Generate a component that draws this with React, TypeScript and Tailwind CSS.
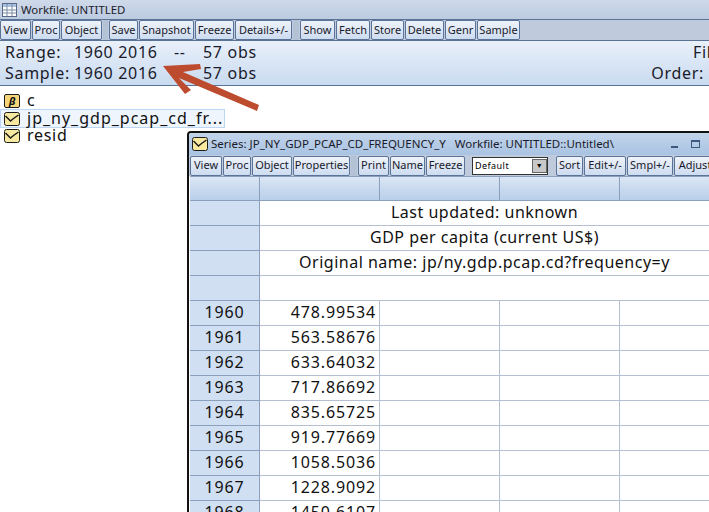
import React from 'react';

const font = "font-['Noto_Sans','Open_Sans',sans-serif]";

const ToolButton = ({ label, width }: { label: string; width: number }) => (
  <div
    style={{ width }}
    className="flex h-[20px] shrink-0 items-center justify-center rounded-[2px] border border-[#5b7396] bg-gradient-to-b from-[#eef3fa] to-[#cddcf0] pb-[2px] text-[11px] leading-none text-[#1a1a2a]"
  >
    {label}
  </div>
);

const Gripper = ({ width }: { width: number }) => (
  <div style={{ width }} className="h-[20px] shrink-0 bg-[#b4c2d6]" />
);

const SeriesIcon = () => (
  <svg width="16" height="14" viewBox="0 0 16 14" className="shrink-0">
    <rect x="0.5" y="0.5" width="15" height="13" rx="2" fill="#f8e9a0" stroke="#1c1c1c" />
    <path d="M1.5 4 L6.5 9 L9.5 6.5 L14.5 3" fill="none" stroke="#1c1c1c" strokeWidth="1.5" />
  </svg>
);

const CoefIcon = () => (
  <div className="flex h-[14px] w-[16px] shrink-0 items-center justify-center rounded-[2px] border border-[#1c1c1c] bg-[#f5d77a] text-[11px] font-bold italic leading-none">
    β
  </div>
);

const workfileTools: [string, number][] = [
  ['View', 31],
  ['Proc', 28],
  ['Object', 41],
];
const workfileTools2: [string, number][] = [
  ['Save', 29],
  ['Snapshot', 55],
  ['Freeze', 39],
  ['Details+/-', 57],
];
const workfileTools3: [string, number][] = [
  ['Show', 35],
  ['Fetch', 34],
  ['Store', 33],
  ['Delete', 39],
  ['Genr', 31],
  ['Sample', 43],
];

const series: [string, string][] = [
  ['1960', '478.99534'],
  ['1961', '563.58676'],
  ['1962', '633.64032'],
  ['1963', '717.86692'],
  ['1964', '835.65725'],
  ['1965', '919.77669'],
  ['1966', '1058.5036'],
  ['1967', '1228.9092'],
  ['1968', '1450.6107'],
];

const notes = ['Last updated: unknown', 'GDP per capita (current US$)', 'Original name: jp/ny.gdp.pcap.cd?frequency=y', ''];

const SeriesWindow = () => (
  <div className="absolute left-[187px] top-[131px] h-[381px] w-[522px] overflow-hidden rounded-tl-[4px] border-l-2 border-t-2 border-[#111] bg-white">
    <div className="flex h-[22px] items-center bg-gradient-to-b from-[#c2d4ea] to-[#a9c3e2] pl-[3px] text-[11.5px] text-[#1a1a2a]">
      <SeriesIcon />
      <span className="ml-[3px] whitespace-nowrap">Series: JP_NY_GDP_PCAP_CD_FREQUENCY_Y</span>
      <span className="ml-[9px] whitespace-nowrap">Workfile: UNTITLED::Untitled\</span>
      <span className="absolute right-[31px] top-[13px] h-[2px] w-[7px] bg-[#3c5a80]" />
      <span className="absolute right-[9px] top-[7px] h-[8px] w-[9px] border border-t-2 border-[#3c5a80]" />
    </div>
    <div className="flex h-[21px] items-center gap-px bg-[#bfcbdc] pl-px">
      <ToolButton label="View" width={32} />
      <ToolButton label="Proc" width={28} />
      <ToolButton label="Object" width={40} />
      <ToolButton label="Properties" width={57} />
      <Gripper width={6} />
      <ToolButton label="Print" width={31} />
      <ToolButton label="Name" width={35} />
      <ToolButton label="Freeze" width={39} />
      <div className="ml-[6px] mr-[7px] flex h-[18px] w-[76px] shrink-0 items-center justify-between border border-[#333] bg-white pl-[2px] text-[9px] tracking-wider">
        Default
        <span className="flex h-[14px] w-[15px] items-center justify-center border border-[#666] bg-[#c8c8c8] text-[7px] leading-none">▼</span>
      </div>
      <ToolButton label="Sort" width={27} />
      <ToolButton label="Edit+/-" width={42} />
      <ToolButton label="Smpl+/-" width={46} />
      <ToolButton label="Adjust+/-" width={56} />
    </div>
    <div className="pl-px">
      <div className="flex h-[25px] border-y border-[#8aa0bc] bg-gradient-to-b from-[#dbe6f5] to-[#b9cfea]">
        <div className="w-[70px] shrink-0 border-r border-[#8aa0bc]" />
        <div className="w-[120px] shrink-0 border-r border-[#8aa0bc]" />
        <div className="w-[120px] shrink-0 border-r border-[#8aa0bc]" />
        <div className="w-[120px] shrink-0 border-r border-[#8aa0bc]" />
      </div>
      {notes.map((note, i) => (
        <div key={i} className="flex h-[25px]">
          <div className="w-[70px] shrink-0 border-b border-r border-[#8aa0bc] bg-[#d0dff2]" />
          <div className="flex flex-1 items-center justify-center border-b border-[#b4c0d2] pb-[3px] text-[16px] leading-none tracking-[0.5px] text-[#111]">
            {note}
          </div>
        </div>
      ))}
      {series.map(([year, value]) => (
        <div key={year} className="flex h-[25px] text-[16px] leading-none tracking-[0.85px] text-[#111]">
          <div className="flex w-[70px] shrink-0 items-center justify-center border-b border-r border-[#8aa0bc] bg-[#d0dff2] pb-[2px]">{year}</div>
          <div className="flex w-[120px] shrink-0 items-center justify-end border-b border-r border-[#b4c0d2] pb-[2px] pr-[3px]">{value}</div>
          <div className="w-[120px] shrink-0 border-b border-r border-[#b4c0d2]" />
          <div className="w-[120px] shrink-0 border-b border-r border-[#b4c0d2]" />
          <div className="flex-1 border-b border-[#b4c0d2]" />
        </div>
      ))}
    </div>
  </div>
);

export default function App() {
  return (
    <div className={`relative h-[512px] w-[709px] overflow-hidden bg-white ${font}`}>
      <div className="flex h-[19px] items-center bg-gradient-to-b from-[#cfdaea] to-[#bccbe0] pl-[2px] text-[11.4px] text-[#1a1a2a]">
        <svg width="15" height="14" viewBox="0 0 15 14" className="shrink-0">
          <rect x="0.5" y="0.5" width="14" height="13" fill="#fff" stroke="#5a6a86" />
          <rect x="1" y="1" width="13" height="3" fill="#a9c0e0" />
          <path d="M5 1V13M10 1V13M1 7H14M1 10H14" stroke="#7d8ca6" />
        </svg>
        <span className="ml-[4px]">Workfile: UNTITLED</span>
      </div>
      <div className="flex h-[22px] items-center gap-px border-y border-[#5b7396] bg-[#bfcbdc]">
        {workfileTools.map(([label, width]) => <ToolButton key={label} label={label} width={width} />)}
        <Gripper width={5} />
        {workfileTools2.map(([label, width]) => <ToolButton key={label} label={label} width={width} />)}
        <Gripper width={6} />
        {workfileTools3.map(([label, width]) => <ToolButton key={label} label={label} width={width} />)}
      </div>
      <div className="relative h-[45px] border-b border-[#5b7396] bg-gradient-to-b from-[#e9f0fa] to-[#c9dbf0] pl-[5px] pt-px text-[16px] leading-[21px] tracking-[0.7px] text-[#1a1a2a]">
        <div className="flex"><span className="w-[69px]">Range:</span><span className="w-[100px]">1960 2016</span><span className="w-[29px]">--</span><span>57 obs</span></div>
        <div className="flex"><span className="w-[69px]">Sample:</span><span className="w-[129px]">1960 2016</span><span>57 obs</span></div>
        <span className="absolute left-[693px] top-px">Fil</span>
        <span className="absolute right-[5px] top-[22px]">Order:</span>
      </div>
      <div className="pl-[4px] pt-[6px] text-[16px] leading-[19px] text-[#111]">
        <div className="flex h-[17px] items-center"><CoefIcon /><span className="ml-[7px]">c</span></div>
        <div className="ml-[-4px] flex h-[19px] w-[225px] items-center border border-[#bcd6f5] bg-[#eef5fd] pl-[3px]"><SeriesIcon /><span className="ml-[7px] whitespace-nowrap tracking-[1px]">jp_ny_gdp_pcap_cd_fr...</span></div>
        <div className="flex h-[15px] items-center"><SeriesIcon /><span className="ml-[7px] tracking-[0.7px]">resid</span></div>
      </div>
      <SeriesWindow />
      <svg className="absolute left-[150px] top-[55px]" width="120" height="60" viewBox="150 55 120 60">
        <polygon points="163,66 200,64 201,69 183,72 259,105 257,111 179,78 191,90 185,94" fill="#bd4b2e" />
      </svg>
    </div>
  );
}
